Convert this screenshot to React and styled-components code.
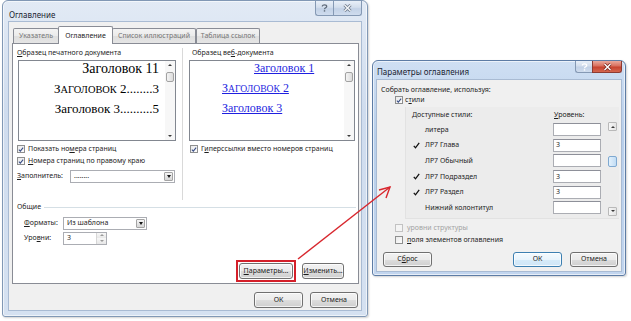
import React from "react";
import styled, { createGlobalStyle } from "styled-components";

const GlobalStyle = createGlobalStyle`
  html, body { margin: 0; padding: 0; background: #ffffff; }
  body {
    font-family: "Noto Sans", "Liberation Sans", sans-serif;
    font-size: 7px;
    line-height: 10px;
    color: #1e1e1e;
  }
  * { box-sizing: border-box; }
`;

const Desktop = styled.div`
  position: relative;
  width: 631px;
  height: 321px;
  overflow: hidden;
  display: flex;
  align-items: flex-start;
  padding-left: 2px;
`;

const Window = styled.div`
  width: ${p => p.$w}px;
  height: ${p => p.$h}px;
  margin-top: ${p => p.$top || 0}px;
  margin-left: ${p => p.$left || 0}px;
  display: flex;
  flex-direction: column;
  flex-shrink: 0;
  padding: 0 ${p => p.$frame}px ${p => p.$frame}px;
  border: 1px solid ${p => (p.$active ? "#5d7ca5" : "#8198b5")};
  border-radius: 6px 6px 3px 3px;
  background: ${p =>
    p.$active
      ? "linear-gradient(180deg, #cfdff3 0%, #b8cfeb 35%, #c2d5ee 100%)"
      : "linear-gradient(180deg, #e2eaf5 0%, #cfdcee 35%, #d5e1f1 100%)"};
  box-shadow: inset 0 0 0 1px rgba(255, 255, 255, 0.6), 1px 1px 2px rgba(0, 0, 0, 0.18);
`;

const TitleBar = styled.div`
  height: ${p => p.$h}px;
  display: flex;
  align-items: flex-start;
  flex-shrink: 0;
`;

const Title = styled.div`
  padding-top: ${p => p.$pt}px;
  font-size: ${p => p.$size}px;
  line-height: 11px;
  color: #1b2532;
`;

const Caption = styled.div`
  display: flex;
  margin-left: auto;
  margin-right: -1px;
`;

const CapBtn = styled.div`
  width: ${p => p.$w}px;
  height: ${p => p.$h}px;
  display: flex;
  align-items: center;
  justify-content: center;
  border: 1px solid ${p => (p.$red ? "#8d3b32" : "#8599b4")};
  border-top: none;
  background: ${p =>
    p.$red
      ? "linear-gradient(180deg, #e9a99c 0%, #d9705e 45%, #c7432f 55%, #d4664f 100%)"
      : "linear-gradient(180deg, #e8eff8 0%, #d3deed 45%, #c2d1e6 55%, #cfdcee 100%)"};
  &:first-child { border-radius: 0 0 0 3px; border-right: none; }
  &:last-child { border-radius: 0 0 3px 0; }
`;

const Client = styled.div`
  flex: 1;
  display: flex;
  flex-direction: column;
  background: #f0f0f0;
  box-shadow: 0 0 0 1px #a9bbd3;
  padding-top: ${p => p.$pt || 0}px;
`;

const TabStrip = styled.div`
  display: flex;
  align-items: flex-end;
  height: 18px;
  margin: 4px 0 0 4px;
  position: relative;
  z-index: 1;
`;

const Tab = styled.div`
  width: ${p => p.$w}px;
  height: ${p => (p.$active ? 18 : 15)}px;
  margin: 0 ${p => (p.$active ? -1 : 0)}px ${p => (p.$active ? 0 : 1)}px;
  display: flex;
  align-items: center;
  justify-content: center;
  border: 1px solid #898c95;
  border-bottom: none;
  border-radius: 2px 2px 0 0;
  background: ${p => (p.$active ? "#ffffff" : "linear-gradient(180deg, #f3f3f3 0%, #ebebeb 50%, #dedede 51%, #e5e5e5 100%)")};
  color: ${p => (p.$active ? "#1e1e1e" : "#767676")};
  position: relative;
  z-index: ${p => (p.$active ? 2 : 1)};
  white-space: nowrap;
`;

const Panel = styled.div`
  height: 241px;
  margin: -1px 2px 0 3px;
  border: 1px solid #898c95;
  background: #ffffff;
  padding: 4px 2px 0 4px;
  display: flex;
  flex-direction: column;
`;

const Columns = styled.div`
  display: flex;
  height: 152px;
  gap: 5px;
`;

const Column = styled.div`
  width: ${p => p.$w}px;
  display: flex;
  flex-direction: column;
  padding-left: ${p => p.$pl || 0}px;
`;

const VSep = styled.div`
  width: 1px;
  background: #d9d9d9;
`;

const Label = styled.div`
  height: 10px;
  margin-left: ${p => p.$ml || 0}px;
  white-space: nowrap;
`;

const PreviewBox = styled.div`
  width: ${p => p.$w}px;
  height: 81px;
  margin: 2px 0 0 ${p => p.$ml || 0}px;
  border: 1px solid #828790;
  background: #ffffff;
  display: flex;
`;

const PreviewText = styled.div`
  flex: 1;
  margin-top: ${p => p.$mt}px;
  overflow: hidden;
`;

const PrintLine = styled.div`
  height: 20px;
  line-height: 20px;
  text-align: right;
  padding-right: 6px;
  font-family: "Liberation Serif", "Times New Roman", serif;
  font-size: ${p => p.$size}px;
  color: #000;
  white-space: nowrap;
`;

const WebLine = styled.div`
  height: 20px;
  line-height: 20px;
  padding-left: ${p => p.$indent}px;
  font-family: "Liberation Serif", "Times New Roman", serif;
  font-size: 12px;
  color: #1f1fe0;
  text-decoration: underline;
  white-space: nowrap;
`;

const SmallCaps = styled.span`
  font-size: 0.8em;
  text-transform: uppercase;
`;

const VScroll = styled.div`
  width: ${p => p.$w}px;
  display: flex;
  flex-direction: column;
  align-items: center;
  background: ${p => p.$bg || "#f7f7f7"};
`;

const ScrollArrow = styled.div`
  width: ${p => (p.$boxed ? 9 : 10)}px;
  height: ${p => (p.$boxed ? 9 : 8)}px;
  margin-top: ${p => (p.$down ? "auto" : "0")};
  display: flex;
  align-items: center;
  justify-content: center;
  border: ${p => (p.$boxed ? "1px solid #b9b9b9" : "none")};
  border-radius: 1px;
  background: ${p => (p.$boxed ? "linear-gradient(90deg, #f6f6f6, #e4e4e4)" : "transparent")};
  &::after {
    content: "";
    border-left: 2px solid transparent;
    border-right: 2px solid transparent;
    ${p => (p.$down ? "border-top: 2px solid #3a3a3a;" : "border-bottom: 2px solid #3a3a3a;")}
  }
`;

const ScrollThumb = styled.div`
  width: ${p => p.$w}px;
  height: ${p => p.$h}px;
  margin-top: ${p => p.$mt}px;
  border: 1px solid ${p => (p.$blue ? "#7fa9d1" : "#a2a2a2")};
  border-radius: 2px;
  background: ${p => (p.$blue ? "linear-gradient(90deg, #e3f1fc, #c1dcf4)" : "linear-gradient(90deg, #f4f4f4, #dcdcdc)")};
`;

const CheckRow = styled.div`
  display: flex;
  align-items: center;
  gap: ${p => p.$gap || 3}px;
  height: ${p => p.$h || 12}px;
  margin: ${p => p.$mt || 0}px 0 0 ${p => p.$ml || 0}px;
  color: ${p => (p.$disabled ? "#a3a3a3" : "#1e1e1e")};
  white-space: nowrap;
`;

const CheckBox = styled.div`
  width: 8px;
  height: 8px;
  flex-shrink: 0;
  display: flex;
  align-items: center;
  justify-content: center;
  border: 1px solid ${p => (p.$disabled ? "#c2c2c2" : "#8e8f8f")};
  background: ${p => (p.$disabled ? "#f4f4f4" : "linear-gradient(135deg, #e9e9e9, #fdfdfd)")};
`;

const FieldRow = styled.div`
  display: flex;
  align-items: center;
  height: 14px;
  margin-top: ${p => p.$mt || 0}px;
  padding-left: ${p => p.$pl || 0}px;
`;

const FieldLabel = styled.div`
  width: ${p => p.$w}px;
  flex-shrink: 0;
  white-space: nowrap;
`;

const Combo = styled.div`
  width: ${p => p.$w}px;
  height: 13px;
  display: flex;
  align-items: center;
  border: 1px solid #abadb3;
  background: #ffffff;
`;

const ComboText = styled.span`
  flex: 1;
  padding-left: 3px;
  white-space: nowrap;
  overflow: hidden;
`;

const DropBtn = styled.div`
  width: 9px;
  align-self: stretch;
  display: flex;
  align-items: center;
  justify-content: center;
  border: 1px solid #a4a4a4;
  margin: 1px;
  border-radius: 1px;
  background: linear-gradient(180deg, #f5f5f5 0%, #e6e6e6 50%, #d6d6d6 100%);
  &::after {
    content: "";
    border-left: 2.5px solid transparent;
    border-right: 2.5px solid transparent;
    border-top: 3px solid #151515;
  }
`;

const SpinBtns = styled.div`
  width: 10px;
  align-self: stretch;
  display: flex;
  flex-direction: column;
  border-left: 1px solid #d6d6d6;
`;

const SpinHalf = styled.div`
  flex: 1;
  display: flex;
  align-items: center;
  justify-content: center;
  background: linear-gradient(180deg, #f7f7f7, #e7e7e7);
  &::after {
    content: "";
    border-left: 2px solid transparent;
    border-right: 2px solid transparent;
    ${p => (p.$down ? "border-top: 2px solid #9a9a9a;" : "border-bottom: 2px solid #9a9a9a;")}
  }
`;

const GroupHead = styled.div`
  display: flex;
  align-items: center;
  height: 10px;
  margin-top: 2px;
  gap: 3px;
  &::after {
    content: "";
    flex: 1;
    height: 1px;
    background: #d5dfe5;
  }
`;

const ButtonRow = styled.div`
  display: flex;
  align-items: center;
  justify-content: ${p => p.$justify || "flex-end"};
  gap: ${p => p.$gap || 0}px;
  height: ${p => p.$h}px;
  margin-top: ${p => p.$mt || 0}px;
  padding: 0 ${p => p.$pr || 0}px 0 ${p => p.$pl || 0}px;
`;

const Button = styled.div`
  width: ${p => p.$w}px;
  height: ${p => p.$h || 16}px;
  margin-left: ${p => (p.$push ? "auto" : "0")};
  display: flex;
  align-items: center;
  justify-content: center;
  border: 1px solid ${p => (p.$default ? "#3c7fb1" : "#707070")};
  border-radius: 3px;
  background: ${p =>
    p.$default
      ? "linear-gradient(180deg, #f4fafe 0%, #e9f4fc 50%, #d6ebf9 51%, #cfe6f7 100%)"
      : "linear-gradient(180deg, #f2f2f2 0%, #ebebeb 50%, #dddddd 51%, #cfcfcf 100%)"};
  box-shadow: inset 0 0 0 1px rgba(255, 255, 255, 0.75);
  white-space: nowrap;
  color: #1b1b1b;
`;

const Highlight = styled.div`
  border: 2px solid #d4202a;
  padding: 1px;
`;

const StylesList = styled.div`
  display: grid;
  grid-template-columns: 1fr 9px;
  grid-template-rows: 15px auto;
  margin: 2px 2px 0 28px;
  padding: 0 2px 2px 0;
  background: #ececec;
  border-left: 1px solid #e2e2e2;
  border-bottom: 1px solid #e2e2e2;
`;

const ListHead = styled.div`
  display: flex;
  align-items: center;
  padding-left: 6px;
  white-space: nowrap;
`;

const HeadName = styled.span`
  flex: 1;
`;

const HeadLevel = styled.span`
  width: 55px;
  padding-left: 1px;
`;

const ListBody = styled.div`
  display: flex;
  flex-direction: column;
`;

const StyleRow = styled.div`
  height: 15.6px;
  display: flex;
  align-items: center;
  padding: 0 7px 0 7px;
`;

const Mark = styled.span`
  width: 12px;
  display: flex;
  align-items: center;
`;

const StyleName = styled.span`
  flex: 1;
  white-space: nowrap;
`;

const LevelInput = styled.div`
  width: 48px;
  height: 13px;
  padding-left: 2px;
  display: flex;
  align-items: center;
  border: 1px solid #abadb3;
  border-top-color: #8e9099;
  background: #ffffff;
`;

const Arrow = styled.svg`
  position: absolute;
  left: 0;
  top: 0;
  pointer-events: none;
`;

const Check = ({ checked, disabled }) => (
  <CheckBox $disabled={disabled}>
    {checked && (
      <svg width="7" height="7" viewBox="0 0 7 7">
        <path d="M1 3.6 L2.7 5.3 L6 1.2" fill="none" stroke="#3a4f87" strokeWidth="1.3" />
      </svg>
    )}
  </CheckBox>
);

const Tick = () => (
  <svg width="7" height="7" viewBox="0 0 7 7">
    <path d="M0.8 3.8 L2.5 5.8 L6.2 0.8" fill="none" stroke="#111" strokeWidth="1.3" />
  </svg>
);

const HelpGlyph = ({ color }) => (
  <svg width="7" height="8" viewBox="0 0 7 8">
    <path d="M1.3 2.4 C1.3 0.4 5.7 0.4 5.7 2.4 C5.7 3.8 3.5 3.8 3.5 5.2" fill="none" stroke={color} strokeWidth="1.3" />
    <rect x="2.8" y="6.2" width="1.4" height="1.4" fill={color} />
  </svg>
);

const CloseGlyph = ({ color, outline }) => (
  <svg width="9" height="8" viewBox="0 0 9 8">
    {outline && <path d="M1.5 1 L7.5 7 M7.5 1 L1.5 7" stroke={outline} strokeWidth="3" />}
    <path d="M1.5 1 L7.5 7 M7.5 1 L1.5 7" stroke={color} strokeWidth="1.4" />
  </svg>
);

const styles = [
  { name: "литера", on: false, level: "" },
  { name: "ЛР7 Глава", on: true, level: "3" },
  { name: "ЛР7 Обычный", on: false, level: "" },
  { name: "ЛР7 Подраздел", on: true, level: "3" },
  { name: "ЛР7 Раздел", on: true, level: "3" },
  { name: "Нижний колонтитул", on: false, level: "" },
];

export default function App() {
  return (
    <>
      <GlobalStyle />
      <Desktop>
        <Window $w={366} $h={317} $frame={6}>
          <TitleBar $h={21}>
            <Title $pt={7.5} $size={8}>Оглавление</Title>
            <Caption>
              <CapBtn $w={18} $h={15}>
                <HelpGlyph color="#5f6b7a" />
              </CapBtn>
              <CapBtn $w={29} $h={15}>
                <CloseGlyph color="#f4f6f9" outline="#6f7b8c" />
              </CapBtn>
            </Caption>
          </TitleBar>
          <Client>
            <TabStrip>
              <Tab $w={46}>Указатель</Tab>
              <Tab $w={55} $active>Оглавление</Tab>
              <Tab $w={84}>Список иллюстраций</Tab>
              <Tab $w={64}>Таблица ссылок</Tab>
            </TabStrip>
            <Panel>
              <Columns>
                <Column $w={160}>
                  <Label><u>О</u>бразец печатного документа</Label>
                  <PreviewBox $w={158} $ml={1}>
                    <PreviewText $mt={-2}>
                      <PrintLine $size={14}>Заголовок 11</PrintLine>
                      <PrintLine $size={13}>З<SmallCaps>аголовок</SmallCaps> 2........3</PrintLine>
                      <PrintLine $size={13}>Заголовок 3..........5</PrintLine>
                    </PreviewText>
                    <VScroll $w={10}>
                      <ScrollArrow />
                      <ScrollThumb $w={8} $h={10} $mt={3} />
                      <ScrollArrow $down />
                    </VScroll>
                  </PreviewBox>
                  <CheckRow $mt={2}>
                    <Check checked />
                    <span>Показать но<u>м</u>ера страниц</span>
                  </CheckRow>
                  <CheckRow>
                    <Check checked />
                    <span><u>Н</u>омера страниц по правому краю</span>
                  </CheckRow>
                  <FieldRow $mt={2}>
                    <FieldLabel $w={53}><u>З</u>аполнитель:</FieldLabel>
                    <Combo $w={105}>
                      <ComboText>........</ComboText>
                      <DropBtn />
                    </Combo>
                  </FieldRow>
                </Column>
                <VSep />
                <Column $w={168} $pl={1}>
                  <Label $ml={3}>Образец ве<u>б</u>-документа</Label>
                  <PreviewBox $w={166}>
                    <PreviewText $mt={-3}>
                      <WebLine $indent={64}>Заголовок 1</WebLine>
                      <WebLine $indent={32}>З<SmallCaps>аголовок</SmallCaps> 2</WebLine>
                      <WebLine $indent={32}>Заголовок 3</WebLine>
                    </PreviewText>
                    <VScroll $w={10}>
                      <ScrollArrow />
                      <ScrollThumb $w={8} $h={10} $mt={3} />
                      <ScrollArrow $down />
                    </VScroll>
                  </PreviewBox>
                  <CheckRow $mt={2} $ml={1}>
                    <Check checked />
                    <span>Г<u>и</u>перссылки вместо номеров страниц</span>
                  </CheckRow>
                </Column>
              </Columns>
              <GroupHead>Общие</GroupHead>
              <FieldRow $mt={4} $pl={7}>
                <FieldLabel $w={39}><u>Ф</u>орматы:</FieldLabel>
                <Combo $w={84}>
                  <ComboText>Из шаблона</ComboText>
                  <DropBtn />
                </Combo>
              </FieldRow>
              <FieldRow $mt={1} $pl={7}>
                <FieldLabel $w={39}>Уро<u>в</u>ни:</FieldLabel>
                <Combo $w={44}>
                  <ComboText>3</ComboText>
                  <SpinBtns>
                    <SpinHalf />
                    <SpinHalf $down />
                  </SpinBtns>
                </Combo>
              </FieldRow>
              <ButtonRow $h={22} $mt={15} $pr={12} $gap={6}>
                <Highlight>
                  <Button $w={54}><u>П</u>араметры...</Button>
                </Highlight>
                <Button $w={42}><u>И</u>зменить...</Button>
              </ButtonRow>
            </Panel>
            <ButtonRow $h={16} $mt={8} $pr={3} $gap={7}>
              <Button $w={49}>ОК</Button>
              <Button $w={48}>Отмена</Button>
            </ButtonRow>
          </Client>
        </Window>

        <Window $w={254} $h={216} $top={60} $left={4} $frame={4} $active>
          <TitleBar $h={19}>
            <Title $pt={4.5} $size={8}>Параметры оглавления</Title>
            <Caption>
              <CapBtn $w={17} $h={12}>
                <HelpGlyph color="#ffffff" />
              </CapBtn>
              <CapBtn $w={30} $h={12} $red>
                <CloseGlyph color="#ffffff" outline="#7a2a22" />
              </CapBtn>
            </Caption>
          </TitleBar>
          <Client $pt={5}>
            <Label $ml={4}>Собрать оглавление, используя:</Label>
            <CheckRow $h={10} $ml={18} $gap={2}>
              <Check checked />
              <span>с<u>т</u>или</span>
            </CheckRow>
            <StylesList>
              <ListHead>
                <HeadName>Доступные стили:</HeadName>
                <HeadLevel><u>У</u>ровень:</HeadLevel>
              </ListHead>
              <div />
              <ListBody>
                {styles.map(s => (
                  <StyleRow key={s.name}>
                    <Mark>{s.on && <Tick />}</Mark>
                    <StyleName>{s.name}</StyleName>
                    <LevelInput>{s.level}</LevelInput>
                  </StyleRow>
                ))}
              </ListBody>
              <VScroll $w={9} $bg="transparent">
                <ScrollArrow $boxed />
                <ScrollThumb $w={9} $h={11} $mt={25} $blue />
                <ScrollArrow $boxed $down />
              </VScroll>
            </StylesList>
            <CheckRow $h={10} $mt={4} $ml={18} $gap={4} $disabled>
              <Check disabled />
              <span>уровни структуры</span>
            </CheckRow>
            <CheckRow $h={10} $mt={2} $ml={18} $gap={4}>
              <Check />
              <span><u>п</u>оля элементов оглавления</span>
            </CheckRow>
            <ButtonRow $h={15} $mt={7} $pl={6} $pr={3} $gap={8} $justify="flex-start">
              <Button $w={49} $h={15}>С<u>б</u>рос</Button>
              <Button $w={49} $h={15} $push $default>ОК</Button>
              <Button $w={48} $h={15}>Отмена</Button>
            </ButtonRow>
          </Client>
        </Window>

        <Arrow width="631" height="321" viewBox="0 0 631 321">
          <path d="M298 259 L390 187" stroke="#d8262d" strokeWidth="1.4" fill="none" />
          <path d="M379 190 L390 187 L386 198" stroke="#d8262d" strokeWidth="1.4" fill="none" />
        </Arrow>
      </Desktop>
    </>
  );
}
